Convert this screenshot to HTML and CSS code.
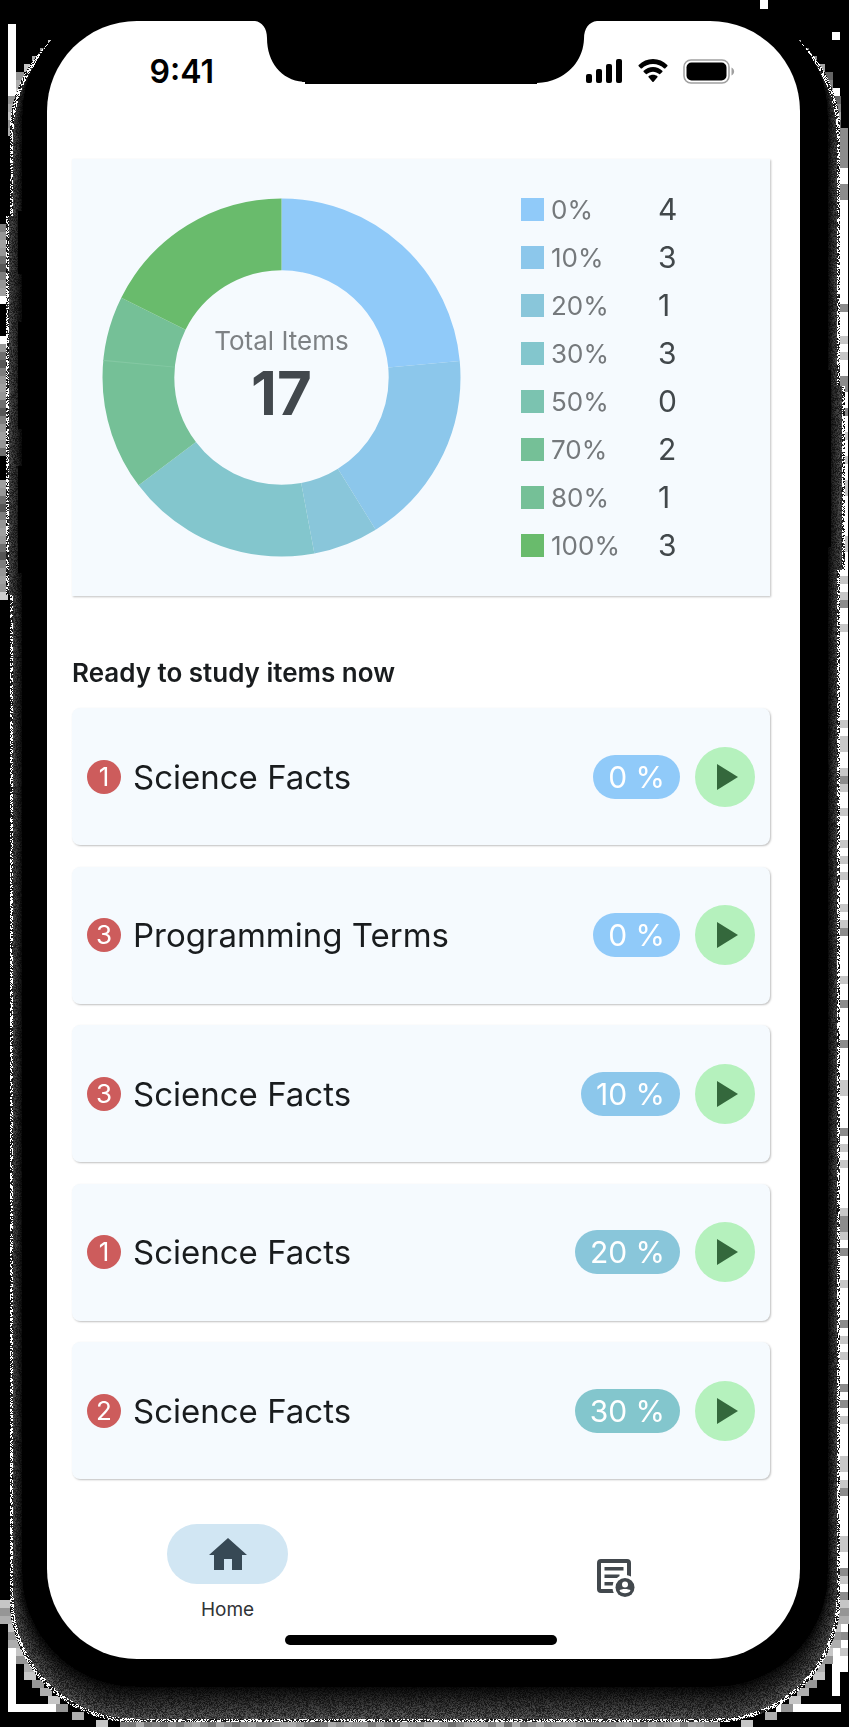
FILE: index.html
```html
<!DOCTYPE html>
<html lang="en">
<head>
<meta charset="utf-8">
<meta name="viewport" content="width=device-width, initial-scale=1">
<title>Study items</title>
<link rel="stylesheet" href="styles.css">
</head>
<body>
<div class="phone">
  <canvas class="backdrop" id="backdrop" aria-hidden="true"></canvas>
  <div class="screen">
    <header class="status">
      <span class="time">9:41</span>
      <svg class="notch" viewBox="0 0 342 63" aria-hidden="true"><path d="M0 0C7 1 12 7 12 17C12 42 27 60 50 61V63H282V62C308 61 328 43 329 18C329 7 334 1 342 0Z"/></svg>
      <span class="indicators">
        <svg width="37" height="24" viewBox="0 0 37 24" aria-hidden="true"><rect x="0" y="15" width="6" height="9" rx="2"/><rect x="10" y="10" width="6" height="14" rx="2"/><rect x="20" y="5" width="6" height="19" rx="2"/><rect x="30" y="0" width="6" height="24" rx="2"/></svg>
        <svg width="32" height="24" viewBox="0 0 32 24" aria-hidden="true"><path d="M16 5c4.300 0 8.200 1.600 11.200 4.400q.5.400.9 0l2.200-2.200q.6-.6 0-1.100C26.500 2.300 21.500 0 16 0S5.500 2.300 1.700 6.100q-.6.500 0 1.100l2.200 2.200q.4.400.9 0C7.800 6.600 11.700 5 16 5z"/><path d="M16 12.700c2.300 0 4.500.9 6.200 2.400q.5.400.9 0l2.200-2.200q.6-.6 0-1.100C22.800 9.500 19.600 8 16 8s-6.800 1.500-9.300 3.800q-.6.500 0 1.100l2.200 2.200q.4.400.9 0c1.700-1.500 3.900-2.400 6.200-2.400z"/><path d="M20.400 18.300q.6-.6 0-1.100C19.200 16.200 17.700 15.700 16 15.700s-3.200.5-4.400 1.500q-.6.500 0 1.100l3.800 4.400q.6.600 1.200 0z"/></svg>
        <svg width="52" height="25" viewBox="0 0 52 25" aria-hidden="true"><rect x="1" y="1" width="45" height="23" rx="7" fill="none" stroke="#a0a0a0" stroke-width="1.500"/><rect x="3.500" y="3.500" width="40" height="18" rx="5"/><path d="M48.500 8.500c3.500 1.500 3.500 6.500 0 8z" fill="#a0a0a0"/></svg>
      </span>
    </header>

    <main class="content">
      <section class="summary" aria-label="Item progress">
        <div class="donut">
          <svg viewBox="0 0 360 360" aria-hidden="true">
            <g class="ring">
              <circle cx="180" cy="180" r="143.500" pathLength="17" stroke="#90caf9" stroke-dasharray="4 13"/>
              <circle cx="180" cy="180" r="143.500" pathLength="17" stroke="#8cc7eb" stroke-dasharray="3 14" stroke-dashoffset="-4"/>
              <circle cx="180" cy="180" r="143.500" pathLength="17" stroke="#89c6da" stroke-dasharray="1 16" stroke-dashoffset="-7"/>
              <circle cx="180" cy="180" r="143.500" pathLength="17" stroke="#83c6cd" stroke-dasharray="3 14" stroke-dashoffset="-8"/>
              <circle cx="180" cy="180" r="143.500" pathLength="17" stroke="#75c097" stroke-dasharray="3 14" stroke-dashoffset="-11"/>
              <circle cx="180" cy="180" r="143.500" pathLength="17" stroke="#84c8a3" stroke-dasharray="0.020 16.980" stroke-dashoffset="-13"/>
              <circle cx="180" cy="180" r="143.500" pathLength="17" stroke="#69bb6c" stroke-dasharray="3 14" stroke-dashoffset="-14"/>
            </g>
          </svg>
          <div class="total"><span class="total-label">Total Items</span><strong class="total-value">17</strong></div>
        </div>
        <table class="legend">
          <tbody>
            <tr><th scope="row"><i class="swatch p0"></i>0%</th><td>4</td></tr>
            <tr><th scope="row"><i class="swatch p10"></i>10%</th><td>3</td></tr>
            <tr><th scope="row"><i class="swatch p20"></i>20%</th><td>1</td></tr>
            <tr><th scope="row"><i class="swatch p30"></i>30%</th><td>3</td></tr>
            <tr><th scope="row"><i class="swatch p50"></i>50%</th><td>0</td></tr>
            <tr><th scope="row"><i class="swatch p70"></i>70%</th><td>2</td></tr>
            <tr><th scope="row"><i class="swatch p80"></i>80%</th><td>1</td></tr>
            <tr><th scope="row"><i class="swatch p100"></i>100%</th><td>3</td></tr>
          </tbody>
        </table>
      </section>

      <h1 class="heading">Ready to study items now</h1>
      <ul class="items">
        <li class="item"><span class="badge">1</span><span class="name">Science Facts</span><span class="pill p0">0 %</span><button class="play" type="button" aria-label="Study Science Facts, 0 %"><svg viewBox="0 0 60 60"><path d="M22 17l21 13-21 13z"/></svg></button></li>
        <li class="item"><span class="badge">3</span><span class="name">Programming Terms</span><span class="pill p0">0 %</span><button class="play" type="button" aria-label="Study Programming Terms, 0 %"><svg viewBox="0 0 60 60"><path d="M22 17l21 13-21 13z"/></svg></button></li>
        <li class="item"><span class="badge">3</span><span class="name">Science Facts</span><span class="pill p10">10 %</span><button class="play" type="button" aria-label="Study Science Facts, 10 %"><svg viewBox="0 0 60 60"><path d="M22 17l21 13-21 13z"/></svg></button></li>
        <li class="item"><span class="badge">1</span><span class="name">Science Facts</span><span class="pill p20">20 %</span><button class="play" type="button" aria-label="Study Science Facts, 20 %"><svg viewBox="0 0 60 60"><path d="M22 17l21 13-21 13z"/></svg></button></li>
        <li class="item"><span class="badge">2</span><span class="name">Science Facts</span><span class="pill p30">30 %</span><button class="play" type="button" aria-label="Study Science Facts, 30 %"><svg viewBox="0 0 60 60"><path d="M22 17l21 13-21 13z"/></svg></button></li>
      </ul>
    </main>

    <nav class="tabs" aria-label="Main">
      <a class="tab" href="#home" aria-current="page">
        <span class="tab-icon"><svg width="38" height="32" viewBox="0 0 38 32" aria-hidden="true"><path d="M5 32V17H0L19 0l19 17h-5v15h-10V21h-8v11z"/></svg></span>
        <span class="tab-label">Home</span>
      </a>
      <a class="tab" href="#report" aria-label="Report">
        <svg width="38" height="38" viewBox="0 0 38 38" aria-hidden="true">
          <rect x="2" y="2" width="30" height="30" rx="2" fill="none" stroke="#42484d" stroke-width="4"/>
          <path d="M7.500 8h19v3.500h-19zM7.500 15.500h15v3.500h-15zM7.500 23h9v3.500h-9z"/>
          <circle cx="28" cy="28.500" r="12.500" fill="#fff"/>
          <circle cx="28" cy="28.500" r="9.500"/>
          <circle cx="28" cy="25.500" r="3" fill="#fff"/>
          <path d="M22.500 31.500c1.500-2 9.500-2 11 0-1.500 3.500-9.500 3.500-11 0z" fill="#fff"/>
        </svg>
      </a>
    </nav>
    <div class="home-bar"></div>
  </div>
</div>
<script src="backdrop.js"></script>
</body>
</html>
```
FILE: styles.css
```css
* {
  box-sizing: border-box;
}

body {
  margin: 0;
  background: #000;
  color: #191c1e;
  font-family: Inter, "Liberation Sans", sans-serif;
}

.phone {
  position: relative;
  display: flex;
  min-height: 100vh;
  padding: 21px 49px 68px 47px;
}

/* Grainy shadow that surrounds the device */
.backdrop {
  position: absolute;
  inset: 0;
  width: 100%;
  height: 100%;
}

.screen {
  position: relative;
  flex: 1;
  display: flex;
  flex-direction: column;
  border-radius: 90px;
  background: #fff;
}

.status {
  display: grid;
  grid-template-columns: 1fr 342px 1fr;
  height: 138px;
  padding-left: 5px;
}

.time {
  justify-self: end;
  margin: 31px 41px 0 0;
  font-size: 32px;
  line-height: 40px;
  font-weight: 600;
  color: #000;
}

.notch {
  width: 342px;
  height: 63px;
}

.indicators {
  display: flex;
  align-items: flex-start;
  gap: 14px;
  padding-top: 38px;
  margin-left: -11px;
}

.content {
  flex: 1;
  display: flex;
  flex-direction: column;
  padding: 0 30px 0 25px;
}

.summary {
  display: flex;
  align-items: center;
  gap: 60px;
  padding: 26px 30px 27px;
  background: #f5fafe;
  box-shadow: 1px 1px 2px rgba(0, 0, 0, 0.25);
}

.donut {
  display: grid;
  width: 359px;
}

.donut > * {
  grid-area: 1 / 1;
}

.ring {
  fill: none;
  stroke-width: 72px;
  transform: rotate(-90deg);
  transform-origin: center;
}

.total {
  display: flex;
  flex-direction: column;
  align-items: center;
  justify-content: center;
}

.total-label {
  font-size: 26px;
  line-height: 32px;
  color: #7d8184;
}

.total-value {
  font-size: 60px;
  line-height: 72px;
  font-weight: 700;
  color: #42484d;
}

.legend {
  border-collapse: collapse;
}

.legend th,
.legend td {
  height: 48px;
  padding: 0;
  text-align: left;
  font-weight: 400;
}

.legend th {
  display: flex;
  align-items: center;
  gap: 7px;
  width: 137px;
  font-size: 26px;
  color: #75797c;
}

.legend td {
  font-size: 30px;
  color: #42484b;
}

.swatch {
  width: 23px;
  height: 23px;
}

.p0 { background: #90caf9; }
.p10 { background: #8cc7eb; }
.p20 { background: #89c6da; }
.p30 { background: #83c6cd; }
.p50 { background: #7bc3b0; }
.p70 { background: #75c097; }
.p80 { background: #75c097; }
.p100 { background: #69bb6c; }

.heading {
  margin: 59px 0 17px;
  font-size: 26px;
  line-height: 36px;
  font-weight: 600;
}

.items {
  flex: 1;
  display: flex;
  flex-direction: column;
  justify-content: space-between;
  gap: 16px;
  margin: 0;
  padding: 0;
  list-style: none;
}

.item {
  display: flex;
  align-items: center;
  height: 137px;
  padding: 0 15px;
  border-radius: 8px;
  background: #f5fafe;
  box-shadow: 1px 1px 2px rgba(0, 0, 0, 0.25);
}

.badge {
  width: 34px;
  border-radius: 50%;
  background: #cd5c5c;
  color: #fff;
  font-size: 26px;
  line-height: 34px;
  text-align: center;
}

.name {
  flex: 1;
  padding-left: 12px;
  font-size: 33px;
}

.pill {
  padding: 0 15px;
  border-radius: 22px;
  color: #fff;
  font-size: 30px;
  line-height: 44px;
}

.play {
  width: 60px;
  height: 60px;
  margin-left: 15px;
  padding: 0;
  border: 0;
  border-radius: 50%;
  background: #b5f1bd;
}

.play svg {
  display: block;
  fill: #34683c;
}

.tabs {
  display: flex;
  justify-content: space-between;
  align-items: center;
  height: 108px;
  margin-top: 45px;
  padding: 0 124px 0 120px;
}

.tab {
  display: flex;
  flex-direction: column;
  align-items: center;
  gap: 14px;
  width: 121px;
  color: #303336;
  fill: #42484d;
  text-decoration: none;
}

.tab-icon {
  display: flex;
  align-items: center;
  justify-content: center;
  width: 100%;
  height: 60px;
  border-radius: 30px;
  background: #d1e6f3;
  fill: #374955;
}

.tab-label {
  font-size: 19px;
  line-height: 24px;
  padding-bottom: 10px;
}

.home-bar {
  align-self: center;
  width: 272px;
  height: 10px;
  margin: 3px 5px 14px 0;
  border-radius: 5px;
  background: #000;
}
```
FILE: backdrop.js
```js
// Paints the dithered shadow ring and stepped blocks around the device body.
const canvas = document.getElementById("backdrop");
const W = (canvas.width = canvas.clientWidth);
const H = (canvas.height = canvas.clientHeight);
const ctx = canvas.getContext("2d");

let seed = 7;
const random = () => {
  seed = (seed * 1664525 + 1013904223) >>> 0;
  return seed / 4294967296;
};

// Signed distance to a rounded box, positive inside.
const inside = (x, y, l, t, r, b, radius) => {
  const dx = Math.abs(x - (l + r) / 2) - (r - l) / 2 + radius;
  const dy = Math.abs(y - (t + b) / 2) - (b - t) / 2 + radius;
  return radius - Math.hypot(Math.max(dx, 0), Math.max(dy, 0)) - Math.min(Math.max(dx, dy), 0);
};

const block = (x, y, w, h, tone) => {
  ctx.fillStyle = `rgb(${tone},${tone},${tone})`;
  ctx.fillRect(x, y, w, h);
};

ctx.fillStyle = "#000";
ctx.fillRect(0, 0, W, H);

const tones = [160, 150, 110, 85, 125, 150];
[[224, 304], [336, 456], [480, 600]].forEach(([from, to]) => {
  for (let y = from; y < to; y += 8) block(0, y, 8, 8, tones[(y / 8) % 6]);
});
block(0, 296, 12, 8, 255);
block(0, 336, 12, 8, 255);
block(0, 592, 8, 8, 205);
block(8, 24, 8, 100, 255);
block(8, H - 107, 8, 92, 255);
block(8, H - 23, 48, 8, 255);
block(W - 73, H - 23, 65, 8, 255);
block(W - 17, H - 85, 8, 54, 255);
block(W - 89, 0, 8, 9, 255);
block(W - 17, 32, 8, 8, 255);
block(W - 17, 88, 8, 50, 255);
for (let y = 128; y < H - 56; y += 8) {
  const n = random();
  block(W - 9, y, 8, 8, y < 168 ? 140 : n < 0.12 ? 140 : n < 0.35 ? 200 : 255);
}

// Stair steps that follow the rounded corners.
for (let y = 40; y < 130; y += 8) {
  const x = Math.floor((135 - Math.sqrt(Math.max(0, 16129 - (y - 133) ** 2))) / 8) * 8;
  block(x, y, 8, 8, 150 + (y % 24) * 3);
  block(W - 8 - x, y, 8, 8, 100 + (y % 24) * 4);
}
for (let y = H - 127; y < H - 6; y += 8) {
  const x = Math.floor((135 - Math.sqrt(Math.max(0, 16641 - (y - H + 130) ** 2))) / 8) * 8;
  block(x, y, 12, 8, 150 + (y % 24) * 3);
  block(W - 12 - x, y, 12, 8, 150 + (y % 24) * 3);
}
for (let x = 120; x < W - 130; x += 8) block(x, H - 6, 8, 6, 110 + Math.floor(random() * 60));

const image = ctx.getImageData(0, 0, W, H);
for (let y = 0; y < H; y++) {
  for (let x = 0; x < W; x++) {
    const left = y > 215 && y < 595 ? 5 : 9;
    const right = y > 385 && y < 570 ? W - 4 : W - 9;
    const outer = inside(x, y, left, 8, right, H - 5, 125);
    if (outer <= 0) continue;
    const body = -inside(x, y, 22, 2, W - 22, H - 41, 113);
    let tone = 0;
    if (body > 0) {
      const depth = outer / (outer + body);
      if (outer < 4) tone = random() < 0.5 ? 255 : Math.floor(random() * 60);
      else tone = Math.floor((8 + 75 * (1 - depth)) * (0.4 + random()));
    }
    const i = (y * W + x) * 4;
    image.data[i] = image.data[i + 1] = image.data[i + 2] = tone;
    image.data[i + 3] = 255;
  }
}
ctx.putImageData(image, 0, 0);

// Side buttons.
ctx.fillStyle = "#000";
ctx.fillRect(18, 211, 5, 63);
ctx.fillRect(18, 322, 5, 107);
ctx.fillRect(18, 466, 5, 107);
ctx.fillRect(W - 23, 370, 5, 177);
```
